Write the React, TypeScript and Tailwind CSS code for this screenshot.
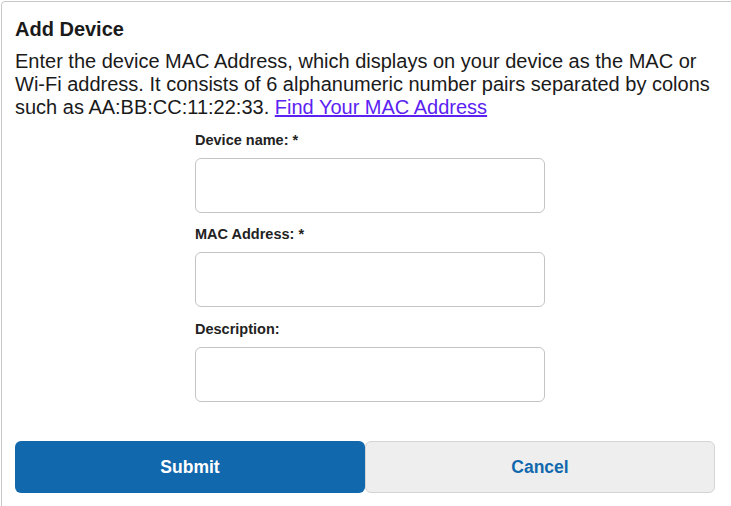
import React from "react";

function Field(props: { label: string; required?: boolean; className?: string }) {
    const { label, required, className } = props;
    return (
        <div className={`flex flex-col ${className ?? ""}`}>
            <label className="text-[14.5px] leading-[16px] font-bold text-[#222]">
                {label}
                {required && " *"}
            </label>
            <input
                type="text"
                className="mt-[10px] h-[55px] w-[350px] rounded-[6px] border border-[#c4c4c4] bg-white px-3 outline-none"
            />
        </div>
    );
}

export default function App() {
    return (
        <div className="h-[506px] w-[731px] overflow-hidden bg-white font-['Liberation_Sans',Arial,sans-serif] text-[#1a1a1a]">
            <div className="ml-px mt-px h-[520px] w-[738px] rounded-[4px] border border-[#c8c8c8] px-[13px] pt-[15px]">
                <h2 className="text-[20px] leading-[24px] font-bold">Add Device</h2>
                <p className="mt-[9px] text-[20px] leading-[23px]">
                    Enter the device MAC Address, which displays on your device as the MAC or Wi-Fi address. It
                    consists of 6 alphanumeric number pairs separated by colons such as AA:BB:CC:11:22:33.{" "}
                    <a href="#" className="text-[#5b22f2] underline">
                        Find Your MAC Address
                    </a>
                </p>

                <form className="mx-auto mt-[13px] w-[350px]">
                    <Field label="Device name:" required />
                    <Field label="MAC Address:" required className="mt-[13px]" />
                    <Field label="Description:" className="mt-[14px]" />
                </form>

                <div className="mt-[39px] flex">
                    <button className="h-[52px] w-[350px] rounded-[6px] bg-[#1268ad] text-[17.5px] font-bold text-white">
                        Submit
                    </button>
                    <button className="h-[52px] w-[350px] rounded-[6px] border border-[#d4d4d4] bg-[#eeeeee] text-[17.5px] font-bold text-[#1268ad]">
                        Cancel
                    </button>
                </div>
            </div>
        </div>
    );
}
